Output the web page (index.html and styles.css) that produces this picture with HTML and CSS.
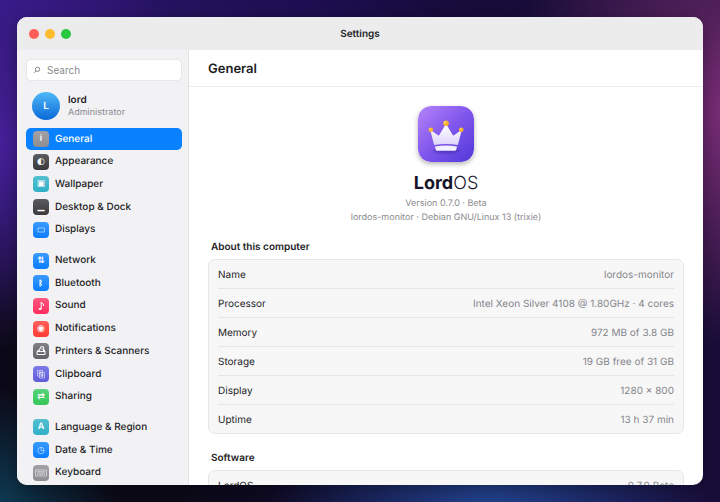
FILE: index.html
```html
<!DOCTYPE html>
<html lang="en">
<head>
<meta charset="utf-8">
<title>Settings</title>
<link rel="stylesheet" href="styles.css">
</head>
<body>
<main class="window">
  <header class="titlebar">
    <div class="lights">
      <button class="light close" aria-label="Close"></button>
      <button class="light minimize" aria-label="Minimize"></button>
      <button class="light maximize" aria-label="Maximize"></button>
    </div>
    <h1 class="window-title">Settings</h1>
  </header>
  <div class="body">
    <aside class="sidebar">
      <label class="search">
        <svg class="search-icon" viewBox="0 0 8 8" aria-hidden="true"><circle cx="4.500" cy="3.300" r="2.200"/><path d="M2.900 5 1.200 6.800"/></svg>
        <input type="search" placeholder="Search" aria-label="Search">
      </label>
      <div class="user">
        <span class="avatar">L</span>
        <div>
          <div class="user-name">lord</div>
          <div class="user-role">Administrator</div>
        </div>
      </div>
      <nav class="nav">
        <a class="item active" href="#"><span class="icon gray">i</span>General</a>
        <a class="item" href="#"><span class="icon dark">◐</span>Appearance</a>
        <a class="item" href="#"><span class="icon teal">▣</span>Wallpaper</a>
        <a class="item" href="#"><span class="icon dark">▁</span>Desktop &amp; Dock</a>
        <a class="item" href="#"><span class="icon blue"><svg class="thin" viewBox="0 0 16 16"><path d="M5 6h6.500v4H5z"/></svg></span>Displays</a>
        <a class="item group-start" href="#"><span class="icon blue">⇅</span>Network</a>
        <a class="item" href="#"><span class="icon blue"><svg viewBox="0 0 16 16"><path d="M7 4.500v7M7 5l2 1.400L7 7.900l2 1.600-2 1.500"/></svg></span>Bluetooth</a>
        <a class="item" href="#"><span class="icon pink"><svg viewBox="0 0 16 16"><path d="M8.200 11V4q.3 1.500 2 2 .8.600.2 2"/><ellipse cx="7" cy="11" rx="1.500" ry="1.100" fill="#fff" stroke="none"/></svg></span>Sound</a>
        <a class="item" href="#"><span class="icon red">◉</span>Notifications</a>
        <a class="item" href="#"><span class="icon slate"><svg viewBox="0 0 16 16"><path d="M4 8.500h8v3H4zM4 8.500l2.200-2M12 8.500l-1-2M6 8.500l1.700-4.700h3L10.500 8.500M8.300 6h1.500"/></svg></span>Printers &amp; Scanners</a>
        <a class="item" href="#"><span class="icon violet"><svg class="thin" viewBox="0 0 16 16"><path d="M4.500 4.500h5v5.500h-5zM6.500 6.500h5v5.500h-5zM6 6h2v2H6zM8.500 8.500h1.500v1.800H8.500z"/></svg></span>Clipboard</a>
        <a class="item" href="#"><span class="icon green">⇄</span>Sharing</a>
        <a class="item group-start" href="#"><span class="icon teal">A</span>Language &amp; Region</a>
        <a class="item" href="#"><span class="icon blue"><svg class="thin" viewBox="0 0 16 16"><circle cx="8" cy="8.500" r="3.200"/><path d="M8 5.300v3.200h3.200"/></svg></span>Date &amp; Time</a>
        <a class="item" href="#"><span class="icon gray"><svg class="thin" viewBox="0 0 16 16"><path d="M2.500 5h11v6h-11zM4 6.700h8M4 8h8M4 9.500h1M6 9.500h4M11 9.500h1"/></svg></span>Keyboard</a>
      </nav>
    </aside>
    <section class="content">
      <header class="content-header"><h2>General</h2></header>
      <div class="pane">
        <div class="hero">
          <svg class="logo" viewBox="0 0 56 56" role="img" aria-label="Crown">
            <defs>
              <linearGradient id="tile" x1="0" y1="0" x2="1" y2="1">
                <stop offset="0" stop-color="#b583f8"/><stop offset=".5" stop-color="#8056ec"/><stop offset="1" stop-color="#5038d8"/>
              </linearGradient>
              <linearGradient id="crown" x1="0" y1="0" x2="0" y2="1">
                <stop offset="0" stop-color="#fff"/><stop offset="1" stop-color="#ddd5fb"/>
              </linearGradient>
              <filter id="soft" x="-50%" y="-50%" width="200%" height="200%"><feGaussianBlur stdDeviation="1.300"/></filter>
            </defs>
            <rect width="56" height="56" rx="13" fill="url(#tile)"/>
            <ellipse cx="28" cy="45" rx="13" ry="2" fill="#3b249e" opacity=".55" filter="url(#soft)"/>
            <path d="M12.500 25q-.4-1.200.8-.4l7.500 5.200L27.300 19q.7-1 1.400 0l6.500 10.800 7.500-5.200q1.200-.8.800.4l-3.600 14q-11.900-2-23.800 0z" fill="url(#crown)"/>
            <path d="M17 40.500q11-2 22 0l-.7 3q-.3 1.200-1.500 1.200H19.200q-1.200 0-1.500-1.200z" fill="#f3f0ff"/>
            <g fill="#f7b52c"><circle cx="12.800" cy="23.700" r="2.300"/><circle cx="28" cy="17.300" r="2.800"/><circle cx="43.200" cy="23.700" r="2.300"/></g>
            <g fill="#ffdc7a"><circle cx="12.200" cy="23" r=".8"/><circle cx="27.200" cy="16.400" r="1"/><circle cx="42.600" cy="23" r=".8"/></g>
          </svg>
          <div class="wordmark">Lord<span>OS</span></div>
          <p class="version">Version 0.7.0 · Beta</p>
          <p class="host">lordos-monitor · Debian GNU/Linux 13 (trixie)</p>
        </div>
        <h3>About this computer</h3>
        <dl class="card">
          <div><dt>Name</dt><dd>lordos-monitor</dd></div>
          <div><dt>Processor</dt><dd>Intel Xeon Silver 4108 @ 1.80GHz · 4 cores</dd></div>
          <div><dt>Memory</dt><dd>972 MB of 3.8 GB</dd></div>
          <div><dt>Storage</dt><dd>19 GB free of 31 GB</dd></div>
          <div><dt>Display</dt><dd>1280 × 800</dd></div>
          <div><dt>Uptime</dt><dd>13 h 37 min</dd></div>
        </dl>
        <h3>Software</h3>
        <dl class="card">
          <div><dt>LordOS</dt><dd>0.7.0 Beta</dd></div>
        </dl>
      </div>
    </section>
  </div>
</main>
</body>
</html>
```
FILE: styles.css
```css
* { box-sizing: border-box; margin: 0; padding: 0; }

body {
  height: 100vh;
  padding: 17px;
  display: flex;
  overflow: hidden;
  font-family: Inter, "DejaVu Sans", sans-serif;
  font-size: 10px;
  line-height: 16px;
  text-rendering: geometricPrecision;
  color: #1d1d1f;
  background:
    radial-gradient(circle at 102% 22%, #7c2e78 0, transparent 28%),
    radial-gradient(circle at 0 28%, #46209a 0, transparent 26%),
    radial-gradient(ellipse at 0 0, #331880 0, transparent 44%),
    radial-gradient(ellipse at 68% 104%, #234692 0, transparent 32%),
    radial-gradient(circle at 0 100%, #0e3a52 0, transparent 13%),
    linear-gradient(70deg, #0c0a18 20%, #150a3e 55%, #1c1036);
}

.window {
  flex: 1;
  min-width: 0;
  display: flex;
  flex-direction: column;
  overflow: hidden;
  border-radius: 10px;
  background: #fff;
  box-shadow: 0 4px 18px rgba(0, 0, 0, .35);
}

.titlebar {
  display: grid;
  grid-template-columns: 1fr auto 1fr;
  align-items: center;
  height: 33px;
  flex: none;
  padding: 0 12px;
  background: #ececed;
}
.lights { display: flex; gap: 6px; }
.light { width: 10px; height: 10px; border: 0; border-radius: 50%; }
.close { background: #ff5f57; }
.minimize { background: #febc2e; }
.maximize { background: #28c840; }
.window-title { font-size: 10px; font-weight: 600; }

.body { flex: 1; min-height: 0; display: flex; }

.sidebar {
  width: 172px;
  flex: none;
  display: flex;
  flex-direction: column;
  padding: 9px 6px 1px 9px;
  background: #f2f2f5;
  border-right: 1px solid #e2e2e5;
}
.search {
  display: flex;
  align-items: center;
  gap: 6px;
  height: 22px;
  flex: none;
  padding: 0 6px;
  border: 1px solid #e7e7ea;
  border-radius: 5px;
  background: #fff;
}
.search-icon { width: 8px; height: 8px; flex: none; fill: none; stroke: #88888c; stroke-width: 1; }
.search input {
  width: 100%;
  min-width: 0;
  border: 0;
  outline: 0;
  background: none;
  font: inherit;
}
.search input::placeholder { color: #8a8a8e; }

.user { display: flex; align-items: center; gap: 8px; padding: 11px 6px 8px; }
.avatar {
  width: 28px;
  height: 28px;
  border-radius: 50%;
  display: grid;
  place-items: center;
  color: #fff;
  font-weight: 600;
  background: linear-gradient(#4fb8f8, #0a6ad8);
}
.user-name { font-weight: 600; line-height: 14px; }
.user-role { font-size: 9px; line-height: 12px; color: #8a8a8e; }

.nav {
  flex: 1;
  min-height: 0;
  display: flex;
  flex-direction: column;
  justify-content: space-between;
}
.item {
  display: flex;
  align-items: center;
  gap: 6px;
  height: 22px;
  flex: none;
  padding: 0 7px;
  border-radius: 5px;
  color: inherit;
  font-weight: 500;
  line-height: 17px;
  text-decoration: none;
}
.active { background: #0a82ff; color: #fff; }
.group-start { margin-top: 8px; }

.icon {
  width: 16px;
  height: 16px;
  border-radius: 4px;
  display: grid;
  place-items: center;
  color: #fff;
  font-size: 9px;
  line-height: 16px;
  font-weight: 600;
}
.icon svg { width: 16px; height: 16px; fill: none; stroke: #fff; stroke-width: 1; }
.icon .thin { stroke-width: .6; opacity: .85; }
.gray { background: linear-gradient(#a2a2a6, #8e8e92); }
.dark { background: linear-gradient(#5c5c60, #3a3a3c); }
.teal { background: linear-gradient(#55bfd0, #30b0c7); }
.blue { background: linear-gradient(#3a9bff, #0a7cff); }
.pink { background: linear-gradient(#ff5880, #ff2d5c); }
.red { background: linear-gradient(#ff605a, #ff3b30); }
.slate { background: linear-gradient(#808084, #636366); }
.violet { background: linear-gradient(#7d7be8, #5e5cd8); }
.green { background: linear-gradient(#5bd47c, #34c759); }

.content { flex: 1; min-width: 0; display: flex; flex-direction: column; }
.content-header {
  height: 37px;
  flex: none;
  display: flex;
  align-items: center;
  padding: 2px 19px 0;
  border-bottom: 1px solid #ececee;
}
.content-header h2 { font-size: 13px; font-weight: 600; }
.pane { flex: 1; min-height: 0; overflow: hidden; padding: 19px; }

.hero { display: flex; flex-direction: column; align-items: center; margin-bottom: 15px; }
.logo {
  width: 56px;
  height: 56px;
  border-radius: 13px;
  box-shadow: 0 2px 5px rgba(0, 0, 0, .3);
}
.wordmark {
  margin-top: 10px;
  font-size: 18px;
  line-height: 24px;
  font-weight: 700;
  color: #17142a;
}
.wordmark span { font-weight: 300; }
.version { font-size: 9px; color: #8a8a8e; }
.host { font-size: 9px; line-height: 12px; color: #8a8a8e; }

h3 { padding: 0 3px; margin-bottom: 4px; font-size: 10px; font-weight: 600; }
.card {
  margin-bottom: 16px;
  padding: 0 9px;
  border: 1px solid #e6e6e8;
  border-radius: 7px;
  background: #f7f7f8;
}
.card div {
  display: flex;
  justify-content: space-between;
  padding: 7px 0 5px;
}
.card div + div { border-top: 1px solid #e6e6e8; }
.card dd { color: #858589; }
```
